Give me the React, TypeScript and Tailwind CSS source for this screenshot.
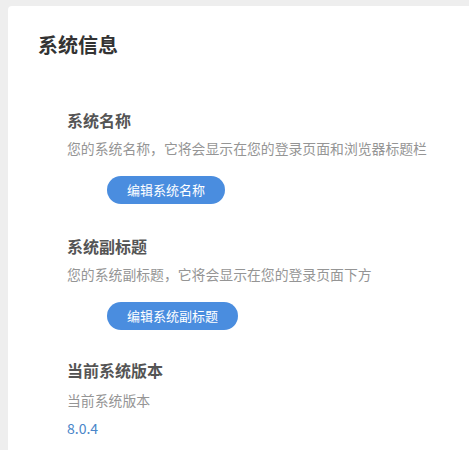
import React from "react";

const font = { fontFamily: '"Noto Sans CJK SC", "Noto Sans", sans-serif' };

const App = () => {
  return (
    <div className="min-h-[450px] bg-[#eeeeee] pl-2 pt-[6px]" style={font}>
      <div className="min-h-[444px] bg-white rounded-tl-[4px] pl-[30px] pt-[25px]">
        {/* Page title */}
        <h1 className="text-[20px] leading-[28px] font-bold text-[#333333]">系统信息</h1>

        <div className="pl-[29px] mt-[49px]">
          {/* System name */}
          <h2 className="text-[16px] leading-[24px] font-bold text-[#555555]">系统名称</h2>
          <p className="mt-[6px] text-[13.85px] leading-[20px] text-[#959595] whitespace-nowrap">
            您的系统名称，它将会显示在您的登录页面和浏览器标题栏
          </p>
          <button className="mt-[18px] ml-[40px] h-[28px] px-[20px] rounded-full bg-[#4a8ddf] text-white text-[13px] leading-[28px]">
            编辑系统名称
          </button>

          {/* Subtitle */}
          <h2 className="mt-[30px] text-[16px] leading-[24px] font-bold text-[#555555]">系统副标题</h2>
          <p className="mt-[6px] text-[13.85px] leading-[20px] text-[#959595] whitespace-nowrap">
            您的系统副标题，它将会显示在您的登录页面下方
          </p>
          <button className="mt-[18px] ml-[40px] h-[28px] px-[20px] rounded-full bg-[#4a8ddf] text-white text-[13px] leading-[28px]">
            编辑系统副标题
          </button>

          {/* Version */}
          <h2 className="mt-[28px] text-[16px] leading-[24px] font-bold text-[#555555]">当前系统版本</h2>
          <p className="mt-[8px] text-[13.85px] leading-[20px] text-[#959595]">当前系统版本</p>
          <p className="mt-[8px] text-[14px] leading-[20px] text-[#4a86c9]">8.0.4</p>
        </div>
      </div>
    </div>
  );
};

export default App;
